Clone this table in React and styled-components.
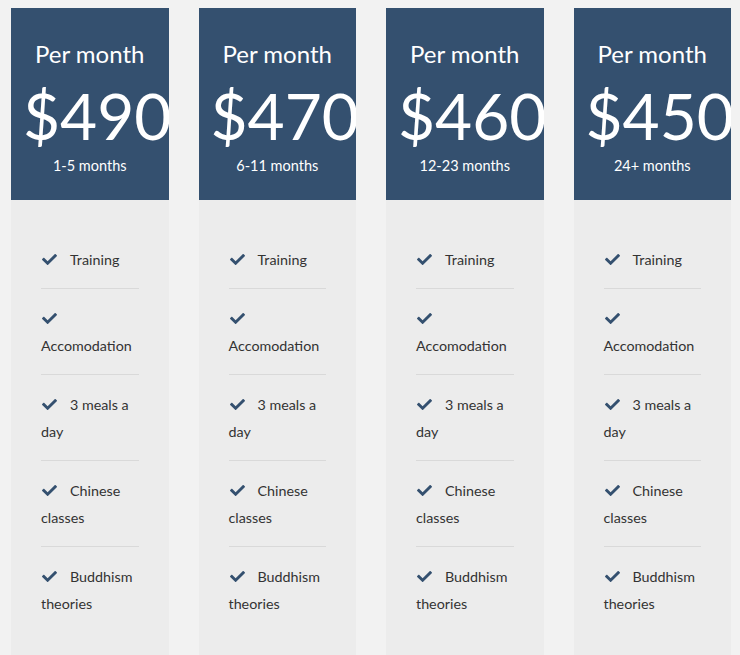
import React from "react";
import styled, { createGlobalStyle } from "styled-components";
import { FaCheck } from "react-icons/fa";

const plans = [
  { price: "$490", term: "1-5 months" },
  { price: "$470", term: "6-11 months" },
  { price: "$460", term: "12-23 months" },
  { price: "$450", term: "24+ months" },
];

const features = [
  "Training",
  "Accomodation",
  "3 meals a day",
  "Chinese classes",
  "Buddhism theories",
];

const PriceCard = ({ plan }) => (
  <Card>
    <Header>
      <div className="per">Per month</div>
      <div className="price">{plan.price}</div>
      <div className="term">{plan.term}</div>
    </Header>
    <Body>
      {features.map((f) => (
        <Row key={f}>
          <Check />
          {f}
        </Row>
      ))}
    </Body>
  </Card>
);

const App = () => (
  <>
    <GlobalStyle />
    <Page>
      {plans.map((p) => (
        <PriceCard key={p.price} plan={p} />
      ))}
    </Page>
  </>
);

const GlobalStyle = createGlobalStyle`
  html, body {
    margin: 0;
    background: #f2f2f2;
    font-family: Lato, "Open Sans", sans-serif;
  }
`;

const Page = styled.div`
  display: grid;
  grid-template-columns: repeat(4, 157.5px);
  gap: 30px;
  padding: 8px 0 0 11px;
  height: 655px;
  box-sizing: border-box;
  overflow: hidden;
`;

const Card = styled.div`
  display: flex;
  flex-direction: column;
  background: #ececec;
  min-height: 700px;
`;

const Header = styled.div`
  height: 192px;
  box-sizing: border-box;
  background: #34506f;
  color: white;
  text-align: center;
  overflow: hidden;
  padding-top: 31px;

  .per {
    font-size: 24px;
    line-height: 30px;
  }
  .price {
    font-size: 64px;
    line-height: 76px;
    margin-top: 9px;
    padding-left: 12px;
    text-align: left;
    white-space: nowrap;
  }
  .term {
    font-size: 14.5px;
    line-height: 18px;
    margin-top: 3px;
  }
`;

const Body = styled.div`
  padding: 30px 30px 40px;
`;

const Row = styled.div`
  padding: 16px 0 15px;
  border-bottom: 1px solid #d9d9d9;
  font-size: 14.3px;
  line-height: 27px;
  color: #333;

  &:last-child {
    border-bottom: none;
  }
`;

const Check = styled(FaCheck)`
  color: #34506f;
  font-size: 15px;
  vertical-align: -2px;
  margin: 0 13px 0 1px;
`;

export default App;
